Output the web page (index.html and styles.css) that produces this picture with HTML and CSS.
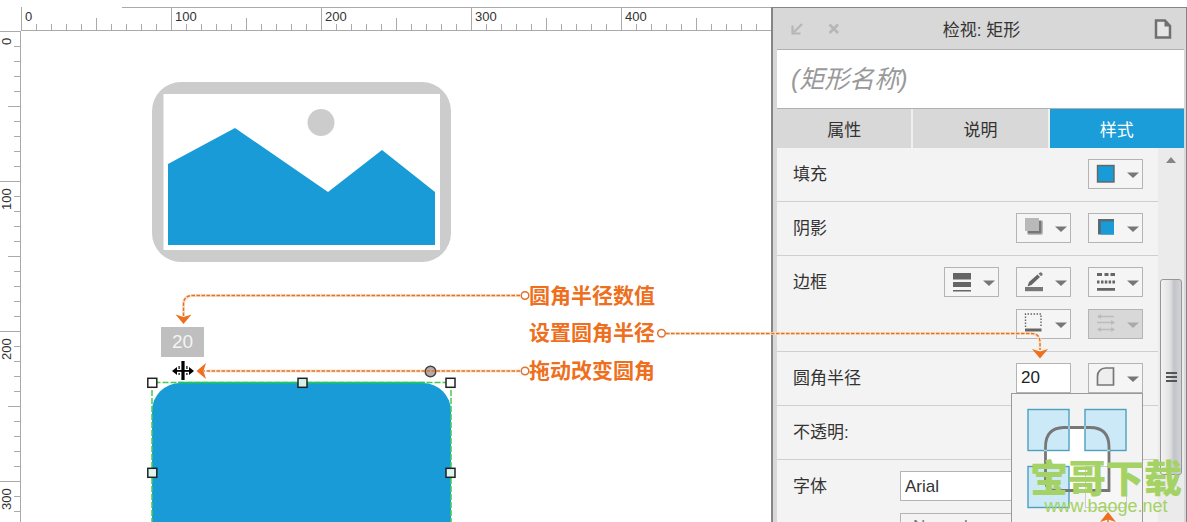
FILE: index.html
```
<!DOCTYPE html>
<html lang="zh-CN">
<head>
<meta charset="utf-8">
<meta name="viewport" content="width=device-width, initial-scale=1">
<title>检视: 矩形</title>
<link rel="stylesheet" href="styles.css">
</head>
<body>
<div class="app">
  <main class="workspace">
    <div class="ruler-x"><span>0</span><span>100</span><span>200</span><span>300</span><span>400</span></div>
    <div class="work-row">
      <div class="ruler-y"><span>0</span><span>100</span><span>200</span><span>300</span></div>
      <div class="canvas"></div>
    </div>
    <!-- canvas artwork -->
    <svg class="artwork" width="771" height="522" viewBox="0 0 771 522" aria-hidden="true">
      <rect x="152" y="82" width="299" height="180" rx="29" fill="#ccc"/>
      <rect x="163.500" y="94" width="276.500" height="156" fill="#fff"/>
      <circle cx="321" cy="122.500" r="13.500" fill="#ccc"/>
      <path d="M168 164 235 128 328 192 382 150 435 192V245H168Z" fill="#189bd6"/>
      <path d="M152 540V411a28 28 0 0 1 28-28H423a28 28 0 0 1 28 28V540Z" fill="#189bd6"/>
      <path d="M152 540V382.500H451V540" fill="none" stroke="#3fd04b" stroke-width="1.500" stroke-dasharray="6 2"/>
      <path d="M178 382.500H425" fill="none" stroke="#20c95a" stroke-width="1.500"/>
      <g fill="#fff" stroke="#222" stroke-width="1.500">
        <rect x="147.800" y="378.300" width="9" height="9"/><rect x="298" y="378.300" width="9" height="9" fill="#d5f2ea"/><rect x="446" y="378.300" width="9" height="9"/>
        <rect x="147.800" y="468.300" width="9" height="9" fill="#dff4ee"/><rect x="446" y="468.300" width="9" height="9" fill="#dff4ee"/>
      </g>
      <g fill="#000">
        <rect x="181.400" y="361" width="3.200" height="19"/>
        <path d="M172 371l5-4v8zM194 371l-5-4v8z"/>
        <rect x="176" y="370" width="14" height="1.800"/>
        <path d="M178.500 366h1.200v3h-1.200zM186.300 366h1.200v3h-1.200zM178.500 373h1.200v2h-1.200zM186.300 373h1.200v2h-1.200z"/>
      </g>
    </svg>
    <output class="radius-tip">20</output>
    <span class="note note-value">圆角半径数值</span>
    <span class="note note-set">设置圆角半径</span>
    <span class="note note-drag">拖动改变圆角</span>
  </main>

  <aside class="inspector">
    <header class="title-bar">
      <span class="window-tools">
        <button type="button" aria-label="停靠"><svg width="12" height="12" viewBox="0 0 12 12"><path d="M11 1 3 9M1.500 2.500V10.500H9.500" fill="none" stroke="#b6b6b6" stroke-width="2.200"/></svg></button>
        <button type="button" aria-label="关闭"><svg width="12" height="12" viewBox="0 0 12 12"><path d="M1.500 1.500 10 10M10 1.500 1.500 10" fill="none" stroke="#b6b6b6" stroke-width="2.600"/></svg></button>
      </span>
      <h1>检视: 矩形</h1>
      <button type="button" class="page-button" aria-label="页面"><svg width="18" height="20" viewBox="0 0 18 20"><path d="M2 1.500H11L16 7V18.500H2Z" fill="#e6e6e6" stroke="#707070" stroke-width="2.500"/><path d="M10.500 1.500V7.500H16Z" fill="#707070"/></svg></button>
    </header>
    <input class="shape-name" type="text" placeholder="(矩形名称)" aria-label="矩形名称">
    <nav class="tabs">
      <button type="button">属性</button>
      <button type="button">说明</button>
      <button type="button" class="active">样式</button>
    </nav>
    <div class="style-body">
      <div class="rows">
        <section class="row"><h2>填充</h2>
          <div class="tools">
            <button type="button" class="tool" aria-label="填充颜色"><svg viewBox="1 1 53 28"><rect x="9.500" y="6.500" width="16.500" height="16.500" fill="#189bd6" stroke="#666" stroke-width="1.400"/><path class="caret" d="M39 13.500h12l-6 5.500z"/></svg></button>
          </div>
        </section>
        <section class="row"><h2>阴影</h2>
          <div class="tools">
            <button type="button" class="tool" aria-label="外部阴影"><svg viewBox="1 1 53 28"><rect x="11" y="7" width="16" height="15" rx="2" fill="#bbb"/><rect x="12" y="8" width="13.500" height="12.500" rx="1" fill="#777"/><rect x="9" y="5" width="14" height="13" fill="#b9b9b9"/><path class="caret" d="M39 13.500h12l-6 5.500z"/></svg></button>
            <button type="button" class="tool" aria-label="内部阴影"><svg viewBox="1 1 53 28"><rect x="10" y="6" width="16" height="15.500" fill="#566b75"/><rect x="13" y="8.500" width="13" height="13" fill="#189bd6"/><path class="caret" d="M39 13.500h12l-6 5.500z"/></svg></button>
          </div>
        </section>
        <section class="row row-border"><h2>边框</h2>
          <div class="tools">
            <button type="button" class="tool" aria-label="线宽"><svg viewBox="1 1 53 28"><path d="M9 6h18v6.500H9zM9 15h18v5H9zM9 23h18v1.500H9z" fill="#666"/><path class="caret" d="M39 13.500h12l-6 5.500z"/></svg></button>
            <button type="button" class="tool" aria-label="线条颜色"><svg viewBox="1 1 53 28"><path d="M9 20h18v4.200H9z" fill="#777"/><path d="M11.500 19.500 13 15 21.500 7.500 24 10 15.500 18Z" fill="#666"/><path d="M22.500 6.800 24 5.500q1-.5 2 .5t.5 2L25 9.300z" fill="#777"/><path class="caret" d="M39 13.500h12l-6 5.500z"/></svg></button>
            <button type="button" class="tool" aria-label="线型"><svg viewBox="1 1 53 28"><path d="M9 6h5v3H9zM16.500 6h4v3h-4zM22.500 6H27v3h-4.500zM9 13.500h2.500v3H9zM13 13.500h2.500v3H13zM16.800 13.500h2.500v3h-2.500zM20.600 13.500h2.500v3h-2.500zM24.400 13.500H27v3h-2.600zM9 21h18v2.800H9z" fill="#666"/><path class="caret" d="M39 13.500h12l-6 5.500z"/></svg></button>
            <button type="button" class="tool" aria-label="边框可见性"><svg viewBox="1 1 53 28"><path d="M9.500 18V5H25V18" fill="none" stroke="#666" stroke-width="1.400" stroke-dasharray="1.500 1.500"/><path d="M9 19.500h16.500v3H9z" fill="#666"/><path class="caret" d="M39 13.500h12l-6 5.500z"/></svg></button>
            <button type="button" class="tool" aria-label="箭头样式" disabled><svg viewBox="1 1 53 28"><path d="M10 7.500H26M9 13.500H26M10 20.500H26" stroke="#bbb" stroke-width="1.400"/><path d="M9 7.500l4-2.500v5zM27 13.500l-4-2.500v5zM9 20.500l4-2.500v5zM27 20.500l-4-2.500v5z" fill="#bbb"/><path d="M39 13.500h12l-6 5.500z" fill="#aaa"/></svg></button>
          </div>
        </section>
        <section class="row"><h2><label for="radius">圆角半径</label></h2>
          <div class="tools">
            <input id="radius" class="number" type="text" value="20">
            <button type="button" class="tool" aria-label="圆角可见性"><svg viewBox="1 1 53 28"><path d="M9.500 22V13a8 8 0 0 1 8-8H25.500V22Z" fill="#eee" stroke="#777" stroke-width="1.700"/><path class="caret" d="M39 13.500h12l-6 5.500z"/></svg></button>
          </div>
          <div class="corner-menu">
            <svg width="130" height="150" viewBox="1012 394 130 150" aria-hidden="true">
              <path d="M1046 490V447q0-19 19-19H1090q18 0 18 19V490Z" fill="#fff"/>
              <rect x="1085.500" y="466.500" width="41" height="41" fill="#f7f7f7" stroke="#ccc"/>
              <g fill="#cbe9f7" stroke="#4f9fbe" stroke-width="1.400"><rect x="1028" y="409.500" width="41" height="41"/><rect x="1085" y="409.500" width="41" height="41"/><rect x="1028" y="466.500" width="41" height="41"/></g>
              <path d="M1045.500 447q0-19 18-19.500H1090q19 0 19 19.500V490.500H1056q-10.500 0-10.500-10.500Z" fill="none" stroke="#777" stroke-width="2.800"/>
              <path d="M1069 426v3M1085 426v3M1044 450.500h3M1107 450.500h3" stroke="#a5dcf0" stroke-width="1.500"/>
              <path d="M1108 512l8 10-8-2.500-8 2.500z" fill="#ee6f1d"/><path d="M1108 518v20" stroke="#ee6f1d" stroke-width="1.500"/>
            </svg>
          </div>
        </section>
        <section class="row"><h2>不透明:</h2></section>
        <section class="row row-font"><h2>字体</h2>
          <div class="selects">
            <select class="font-family" aria-label="字体"><option>Arial</option></select>
            <select class="font-style" aria-label="字形"><option>Normal</option></select>
          </div>
        </section>
      </div>
      <div class="scrollbar">
        <svg class="scroll-up" width="12" height="8" viewBox="0 0 12 8" aria-hidden="true"><path d="M1 7 6 1l5 6z" fill="#858585"/></svg>
        <div class="thumb"><i></i><i></i><i></i></div>
      </div>
    </div>
  </aside>

  <!-- connectors between notes and controls -->
  <svg class="connectors" width="1187" height="522" viewBox="0 0 1187 522" aria-hidden="true">
    <g fill="none" stroke="#fde3c4" stroke-width="3"><path d="M520 295.500H193q-9.500 0-9.500 9V316M520 371H208M666 333.500H1031q9 0 9 9V350"/></g>
    <circle cx="430.500" cy="371.500" r="5.300" fill="#b9aaa5" stroke="#444" stroke-width="1.500"/>
    <g fill="none" stroke="#dc7336" stroke-width="1.400" stroke-dasharray="3.500 1.500"><path d="M520 295.500H193q-9.500 0-9.500 9V316M520 371H204M666 333.500H1031q9 0 9 9V350"/></g>
    <g fill="#fff" stroke="#e2702f" stroke-width="1.500"><circle cx="525" cy="295.500" r="3.800"/><circle cx="525" cy="371" r="3.800"/><circle cx="661.500" cy="333.300" r="3.800"/></g>
    <path d="M183.500 324l-8-9.500 8 2.500 8-2.500zM196.500 371l9.500-8-2.500 8 2.500 8zM1040 358.500l-8-9.500 8 2.500 8-2.500z" fill="#ee6f1d"/>
  </svg>
  <div class="watermark"><strong>宝哥下载</strong><span>www.baoge.net</span></div>
</div>
</body>
</html>
```
FILE: styles.css
```
* { box-sizing: border-box; }

body {
  margin: 0;
  background: #fff;
  color: #333;
  font-family: "Liberation Sans", "Noto Sans CJK SC", sans-serif;
  font-size: 17px;
}

button, input, select { font: inherit; color: inherit; border-radius: 0; }
h1, h2 { margin: 0; font-size: 17px; font-weight: 400; }
svg { display: block; }

.app {
  position: relative;
  display: grid;
  grid-template-columns: minmax(0, 1fr) 416px;
  height: 100vh;
  padding-top: 7px;
  overflow: hidden;
}

/* Workspace and rulers: 150px per 100 units */
.workspace { display: flex; flex-direction: column; min-width: 0; }

.ruler-x {
  display: flex;
  height: 24px;
  margin-left: 21px;
  overflow: hidden;
  font-size: 13px;
  line-height: 20px;
  border-bottom: 1px solid #aaa;
  background:
    linear-gradient(#aaa, #aaa) 101px 0 / 100% 1px no-repeat,
    repeating-linear-gradient(90deg, #aaa 0 1px, transparent 1px 150px) 0 0 / 100% 100% no-repeat,
    repeating-linear-gradient(90deg, #aaa 0 1px, transparent 1px 75px) 0 11px / 100% 12px no-repeat,
    repeating-linear-gradient(90deg, #aaa 0 1px, transparent 1px 15px) 0 17px / 100% 6px no-repeat;
}
.ruler-x span { flex: 0 0 150px; padding-left: 4px; }

.work-row { display: flex; flex: 1; min-height: 0; }

.ruler-y {
  display: flex;
  flex-direction: column;
  width: 21px;
  overflow: hidden;
  font-size: 13px;
  line-height: 14px;
  border-right: 1px solid #aaa;
  background:
    repeating-linear-gradient(#aaa 0 1px, transparent 1px 150px) 0 0 / 100% 100% no-repeat,
    repeating-linear-gradient(#aaa 0 1px, transparent 1px 75px) 8px 0 / 12px 100% no-repeat,
    repeating-linear-gradient(#aaa 0 1px, transparent 1px 15px) 14px 0 / 6px 100% no-repeat;
}
.ruler-y span {
  flex: 0 0 150px;
  align-self: flex-start;
  writing-mode: vertical-rl;
  transform: rotate(180deg);
  text-align: right;
  padding-bottom: 7px;
}
.canvas { flex: 1; }

.artwork, .connectors { position: absolute; left: 0; top: 0; }
.connectors { pointer-events: none; }

.radius-tip {
  position: absolute;
  left: 161px;
  top: 327px;
  width: 43px;
  line-height: 30px;
  text-align: center;
  font-size: 19px;
  color: #f4f4f4;
  background: #bfbfbf;
}

.note {
  position: absolute;
  left: 529px;
  font-size: 21px;
  font-weight: 700;
  line-height: 30px;
  white-space: nowrap;
  color: #ee6f1d;
}
.note-value { top: 281px; }
.note-set { top: 318px; }
.note-drag { top: 356px; }

/* Inspector */
.inspector {
  display: flex;
  flex-direction: column;
  min-height: 0;
  padding: 0 2px 0 4px;
  border: solid #858585;
  border-width: 1px 1px 0 2px;
  background: #d8d8d8;
}

.title-bar {
  display: grid;
  grid-template-columns: 1fr auto 1fr;
  align-items: center;
  height: 42px;
  padding: 0 12px 0 14px;
  border-bottom: 1px solid #b0b0b0;
}
.title-bar button { padding: 0; border: 0; background: none; }
.window-tools { display: flex; gap: 25px; }
.page-button { justify-self: end; }

.shape-name {
  width: 100%;
  height: 59px;
  padding: 0 14px;
  border: 0;
  border-bottom: 1px solid #b0b0b0;
  background: #fff;
  font-size: 25px;
  font-style: italic;
}
.shape-name::placeholder { color: #999; }

.tabs {
  display: grid;
  grid-template-columns: repeat(3, 1fr);
  gap: 2px;
  height: 39px;
  background: #f0f0f0;
}
.tabs button { padding: 0; border: 0; background: #d8d8d8; }
.tabs .active { color: #fff; background: #1a9dd8; }

.style-body { display: flex; flex: 1; min-height: 0; background: #f3f3f3; }
.rows { flex: 1; }

.row {
  position: relative;
  display: flex;
  justify-content: space-between;
  min-height: 54px;
  padding: 11px 15px 11px 16px;
  border-bottom: 1px solid #cfcfcf;
}
.row h2 { line-height: 31px; white-space: nowrap; }
.row-border { min-height: 96px; }

.tools {
  display: flex;
  flex-wrap: wrap;
  justify-content: flex-end;
  align-content: flex-start;
  gap: 12px 17px;
  width: 199px;
}
.tool {
  width: 55px;
  height: 30px;
  padding: 0;
  border: 1px solid #b4b4b4;
  background: #f5f5f5;
}
.tool:disabled { background: #d8d8d8; }
.tool svg { width: 100%; height: 100%; }
.caret { fill: #777; }

.number {
  width: 55px;
  height: 30px;
  padding: 0 4px;
  border: 1px solid #b4b4b4;
  background: #fff;
  color: #222;
}

.corner-menu {
  position: absolute;
  right: 15px;
  top: 41px;
  z-index: 1;
  border: 1px solid #999;
  background: #f3f3f3;
}

.selects { display: flex; flex-direction: column; gap: 12px; width: 243px; }
.selects select {
  height: 30px;
  padding: 0 4px;
  border: 1px solid #b4b4b4;
  appearance: none;
  background: #fff;
}
.selects .font-style { padding: 0 12px 4px; background: #f3f3f3; color: #777; }

.scrollbar { position: relative; width: 26px; background: #ebebeb; }
.scroll-up { margin: 8px 0 0 7px; }
.thumb {
  display: flex;
  flex-direction: column;
  align-items: center;
  justify-content: center;
  gap: 2px;
  height: 196px;
  margin: 115px 2px 0;
  border: 1px solid #969696;
  border-radius: 3px;
  background: linear-gradient(90deg, #f3f3f3, #e2e2e3 45%, #c3c4c8 65%, #d2d3d6);
}
.thumb i { width: 11px; height: 2px; background: #555; }

.watermark {
  position: absolute;
  right: 5px;
  bottom: 7px;
  display: flex;
  flex-direction: column;
  align-items: center;
  z-index: 2;
  color: #a5d264;
}
.watermark strong { font-size: 38px; font-weight: 900; line-height: 36px; }
.watermark span { font-size: 18px; line-height: 18px; }
```
